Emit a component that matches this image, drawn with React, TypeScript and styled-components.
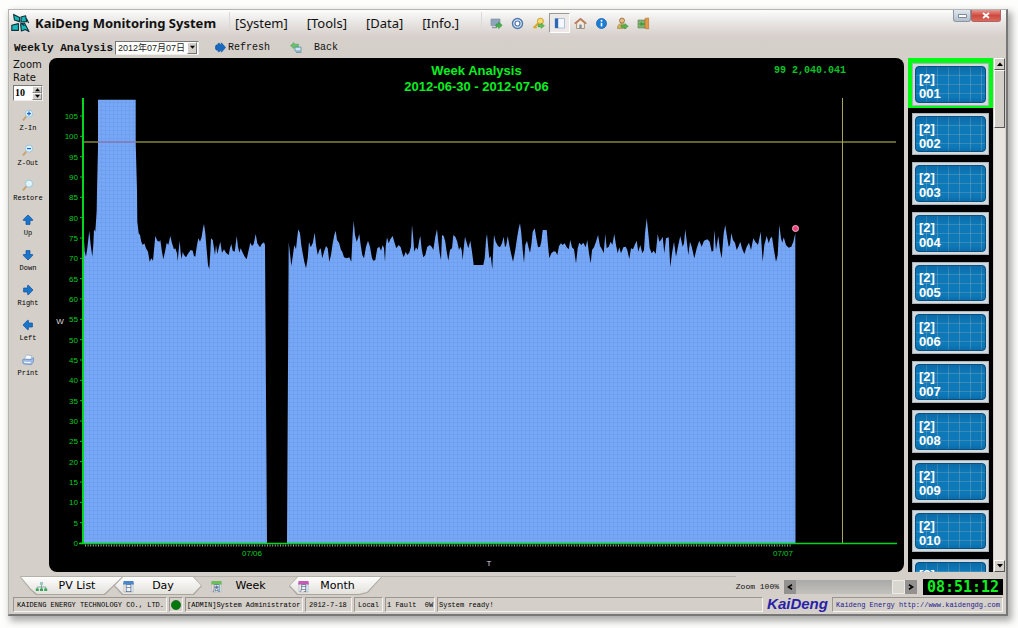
import React, { useState } from "react";
import styled, { createGlobalStyle, css } from "styled-components";

const mono = `"Liberation Mono", "Noto Sans CJK SC", monospace`;
const small = `"Liberation Serif", "Noto Sans CJK SC", serif`;
const sans = `"DejaVu Sans", "Noto Sans CJK SC", sans-serif`;
const arial = `"Liberation Sans", "Noto Sans CJK SC", sans-serif`;
const face = "#d4cfc8";

const GlobalStyle = createGlobalStyle`
  *, *::before, *::after { box-sizing: border-box; }
  body { margin: 0; background: #fdfdfb; color: #111; font-family: ${sans}; }
  button { border: 0; padding: 0; background: none; color: inherit; font: inherit; }
  svg { display: block; }
`;

const Page = styled.div`
  padding: 9px 10px 13px 8px;
`;

const Window = styled.main`
  display: flex;
  flex-direction: column;
  border: 1px solid #b4b4b0;
  border-right: 2px solid #777;
  border-bottom: 2px solid #777;
  background: ${face};
  box-shadow: 3px 4px 7px 1px #aaa;
`;

const TopArea = styled.header`
  height: 48px;
  background: linear-gradient(#fdfdfd 0, #e6e3e0 14px, #d6cfcb 27px, ${face} 48px);
`;

const TitleBar = styled.div`
  display: flex;
  align-items: center;
  height: 26px;
  padding: 0 5px 0 2px;
`;

const Brand = styled.h1`
  display: flex;
  align-items: center;
  gap: 5px;
  width: 218px;
  margin: 0;
  font: bold 13px/26px "Noto Sans", sans-serif;
  white-space: nowrap;
`;

const Menu = styled.nav`
  display: flex;
  align-items: center;
  gap: 19px;
  height: 22px;
  padding-left: 5px;
  width: 252px;
  border-left: 1px solid #dcd9d6;
  font: 13px/20px "Noto Sans", sans-serif;
`;

const ToolStrip = styled.div`
  display: flex;
  align-items: center;
  flex: 1;
  height: 22px;
  padding-left: 4px;
  border-left: 1px solid #dcd9d6;
`;

const ToolButton = styled.button<{ $on?: boolean }>`
  display: grid;
  place-items: center;
  width: 21px;
  height: 20px;
  ${(p) =>
    p.$on &&
    css`
      background: #ece9e7;
      border: 1px solid;
      border-color: #999 #fff #fff #999;
    `}
`;

const WindowControls = styled.div`
  display: flex;
  align-self: flex-start;
`;

const WindowButton = styled.button<{ $close?: boolean }>`
  display: grid;
  place-items: center;
  width: ${(p) => (p.$close ? 30 : 18)}px;
  height: 12px;
  border: 1px solid ${(p) => (p.$close ? "#a66" : "#8b96a3")};
  border-top: 0;
  border-radius: 0 0 3px 3px;
  background: ${(p) =>
    p.$close ? "linear-gradient(#e59a90, #cf4a40 50%, #d9685c)" : "linear-gradient(#dfe6ee, #b3c0ce)"};
`;

const ActionBar = styled.div`
  display: flex;
  align-items: center;
  height: 22px;
  padding: 1px 0 0 5px;
  font: 10px/14px ${mono};
`;

const ViewLabel = styled.label`
  width: 101px;
  font: bold 11px/14px ${mono};
  white-space: nowrap;
`;

const DateBox = styled.span`
  display: flex;
  position: relative;
  width: 84px;
  height: 14px;
  margin-right: 16px;
  border: 1px solid;
  border-color: #777 #eee #eee #777;
  background: #fff;
`;

const DateSelect = styled.select`
  appearance: none;
  width: 100%;
  border: 0;
  padding: 0 0 0 2px;
  background: none;
  font: 9px/12px ${arial};
  color: #222;
`;

const DateArrow = styled.span`
  position: absolute;
  right: 1px;
  top: 0;
  display: grid;
  place-items: center;
  width: 10px;
  height: 12px;
  background: ${face};
  border: 1px solid;
  border-color: #fff #777 #777 #fff;
  pointer-events: none;
`;

const ActionButton = styled.button<{ $gap: number }>`
  display: flex;
  align-items: center;
  gap: ${(p) => p.$gap}px;
  margin-right: 20px;
`;

const Body = styled.section`
  display: flex;
  height: 514px;
`;

const Rail = styled.aside`
  display: flex;
  flex-direction: column;
  width: 40px;
`;

const RateLabel = styled.label`
  padding: 0 0 1px 4px;
  font: 10px/13px ${sans};
`;

const Spinner = styled.div`
  display: flex;
  width: 30px;
  height: 16px;
  margin: 0 0 5px 4px;
  background: #fff;
  border: 1px solid;
  border-color: #777 #eee #eee #777;
`;

const SpinInput = styled.input`
  width: 18px;
  border: 0;
  padding: 0 0 0 1px;
  background: none;
  font: bold 10px/14px ${small};
`;

const SpinButtons = styled.div`
  display: grid;
  grid-template-rows: 1fr 1fr;
  width: 10px;
`;

const SpinButton = styled.button`
  display: grid;
  place-items: center;
  background: ${face};
  border: 1px solid;
  border-color: #fff #888 #888 #fff;
`;

const RailButton = styled.button`
  display: flex;
  flex-direction: column;
  align-items: center;
  gap: 2px;
  height: 35px;
  padding: 3px 2px 0 0;
  font: 7px/10px ${mono};
  color: #000;
`;

const ChartPanel = styled.figure`
  flex: 1;
  min-width: 0;
  margin: 0;
  overflow: hidden;
  border-radius: 8px;
  background: #000;
  color: #0aee22;
`;

const ChartHead = styled.figcaption`
  display: grid;
  grid-template-columns: 1fr auto 1fr;
  height: 40px;
  padding-top: 5px;
`;

const ChartTitle = styled.h2`
  grid-column: 2;
  margin: 0;
  text-align: center;
  font: bold 13px/16px ${arial};
`;

const Readout = styled.output`
  justify-self: end;
  padding: 1px 58px 0 0;
  font: bold 10px/14px ${mono};
  color: #0cc42c;
`;

const Plot = styled.svg`
  width: 100%;
  height: 474px;
  font-family: ${arial};
  font-size: 8px;
`;

const PanelList = styled.div`
  width: 85px;
  height: 514px;
  margin-left: 4px;
  overflow: hidden;
  background: #000;
`;

const PanelStack = styled.div`
  display: flex;
  flex-direction: column;
  height: 546px;
`;

const PanelSlot = styled.button<{ $active: boolean }>`
  flex: 1 1 0;
  min-height: 0;
  display: flex;
  padding: 2px 0 1px;
  border: solid ${(p) => (p.$active ? "#00fa14" : "#000")};
  border-width: 3px 4px 1px;
  background: ${(p) => (p.$active ? "#00fa14" : "#000")};
`;

const PanelFrame = styled.span`
  flex: 1;
  display: flex;
  align-self: stretch;
  padding: 2px;
  background: #d3dade;
  border: 1px solid #a9b2b8;
`;

const Panel = styled.span`
  flex: 1;
  padding: 4px 0 0 3px;
  border: 1px solid #0b4f7e;
  border-radius: 4px;
  background:
    linear-gradient(#0a4f8a55, transparent 8px, transparent 30px, #0a4f8a55),
    repeating-linear-gradient(90deg, transparent 0 10px, #8fa9b866 10px 11px),
    repeating-linear-gradient(transparent 0 8px, #8fa9b855 8px 9px),
    #0d79b8;
  color: #fff;
  text-align: left;
  font: bold 13px/15px ${arial};
`;

const ScrollBar = styled.div`
  display: flex;
  flex-direction: column;
  width: 11px;
  height: 514px;
  margin: 0 1px;
  background: #e9e6e1;
`;

const ScrollArrow = styled.button`
  display: grid;
  place-items: center;
  height: 12px;
  background: ${face};
  border: 1px solid;
  border-color: #fff #555 #555 #fff;
`;

const ScrollThumb = styled.div`
  height: 58px;
  margin-bottom: auto;
  background: ${face};
  border: 1px solid;
  border-color: #fff #555 #555 #fff;
`;

const BottomBar = styled.div`
  display: flex;
  align-items: center;
  height: 25px;
  padding: 4px 3px 0 11px;
`;

const Tabs = styled.div`
  display: flex;
  flex: 1;
  align-self: flex-start;
  border-top: 1px solid #b5b1ab;
`;

const shapes = {
  first: "polygon(0 0, 100% 0, calc(100% - 18px) 100%, 16px 100%, 10px 70%)",
  middle: "polygon(8px 0, calc(100% - 8px) 0, 100% 50%, calc(100% - 8px) 100%, 8px 100%, 0 50%)",
  last: "polygon(8px 0, 100% 0, calc(100% - 14px) 88%, calc(100% - 22px) 100%, 8px 100%, 0 50%)",
};

const Tab = styled.button<{ $shape: keyof typeof shapes; $on: boolean; $w: number }>`
  position: relative;
  display: flex;
  align-items: center;
  width: ${(p) => p.$w}px;
  height: 18px;
  padding-left: ${(p) => (p.$shape === "first" ? 15 : 8)}px;
  margin-right: ${(p) => (p.$shape === "first" ? -9 : 0)}px;
  font: 11px/16px ${sans};
  color: #000;
  isolation: isolate;

  &::before,
  &::after {
    content: "";
    position: absolute;
    inset: 0;
    z-index: -1;
    clip-path: ${(p) => shapes[p.$shape]};
    background: ${(p) => (p.$on ? "transparent" : "#aaa69f")};
  }
  &::after {
    inset: 0 1px 1px;
    background: ${(p) => (p.$on ? "transparent" : "linear-gradient(#fdfdfc, #e3e1dc)")};
  }
`;

const TabText = styled.span<{ $shape: keyof typeof shapes }>`
  flex: 1;
  padding-right: ${(p) => (p.$shape === "middle" ? 11 : 17)}px;
  text-align: center;
  white-space: nowrap;
`;

const ZoomLabel = styled.label`
  padding-right: 5px;
  font: 8px/12px ${mono};
`;

const ZoomBar = styled.div`
  display: flex;
  width: 133px;
  height: 14px;
  margin-right: 6px;
  background: linear-gradient(#a9a9a7, #c2c1bd);
`;

const ZoomArrow = styled.button`
  display: grid;
  place-items: center;
  width: 12px;
  background: #92918f;
`;

const ZoomRange = styled.input`
  appearance: none;
  flex: 1;
  min-width: 0;
  margin: 0;
  background: none;
  &::-webkit-slider-thumb {
    appearance: none;
    width: 13px;
    height: 14px;
    background: #d9d5cf;
    border: 1px solid #eceae6;
  }
`;

const Clock = styled.time`
  width: 80px;
  height: 16px;
  background: #000;
  color: #10ee20;
  text-align: center;
  font: bold 15px/16px "DejaVu Sans Mono", monospace;
`;

const StatusBar = styled.footer`
  display: flex;
  gap: 2px;
  height: 17px;
  padding: 0 3px 2px 4px;
`;

const StatusCell = styled.div<{ $w?: number; $pad?: number }>`
  display: flex;
  align-items: center;
  ${(p) => (p.$w ? `width: ${p.$w}px;` : "flex: 1;")}
  padding-left: ${(p) => p.$pad ?? 1}px;
  border: 1px solid;
  border-color: #9a9690 #f4f2ee #f4f2ee #9a9690;
  font: 7px/12px ${mono};
  color: #000;
  white-space: pre;
  a {
    color: #1b1b8c;
    text-decoration: none;
  }
`;

const StatusLed = styled.div`
  display: grid;
  place-items: center;
  width: 14px;
  border: 1px solid;
  border-color: #9a9690 #f4f2ee #f4f2ee #9a9690;
`;

const Logo = styled.strong`
  width: 65px;
  text-align: center;
  color: #2a1fa8;
  font: italic bold 15px/14px ${arial};
`;

type Dir = "up" | "down" | "left" | "right";
const turn: Record<Dir, number> = { up: 0, right: 90, down: 180, left: 270 };

const Triangle = ({ dir, w = 5 }: { dir: Dir; w?: number }) => (
  <svg width={w} height={w} viewBox="0 0 6 6">
    <path d="M0 5 L3 1.5 L6 5Z" fill="#000" transform={`rotate(${turn[dir]} 3 3)`} />
  </svg>
);

const Chevron = ({ dir }: { dir: "left" | "right" }) => (
  <svg width="6" height="6" viewBox="0 0 6 6">
    <path d={dir === "left" ? "M5 .8L1.4 3L5 5.2" : "M1 .8L4.6 3L1 5.2"} fill="none" stroke="#000" strokeWidth="1.6" />
  </svg>
);

const Arrow = ({ dir }: { dir: Dir }) => (
  <svg width="12" height="12" viewBox="0 0 12 12">
    <path
      d="M6 1 L10.6 5.4 V6.4 H8 V10.4 H4 V6.4 H1.4 V5.4Z"
      fill="#1976cb"
      stroke="#0c4f9c"
      strokeWidth=".7"
      transform={`rotate(${turn[dir]} 6 6)`}
    />
  </svg>
);

const Magnifier = ({ sign }: { sign?: "+" | "-" }) => (
  <svg width="12" height="12" viewBox="0 0 12 12">
    <path d="M4.6 7 L1.4 10.8" stroke="#c9a06c" strokeWidth="1.8" strokeLinecap="round" />
    <circle cx="7" cy="4.6" r="3.6" fill="#dff5fb" stroke="#9cc6dc" />
    {sign && <path d="M5 4.6H9" stroke="#2064c8" strokeWidth="1.3" />}
    {sign === "+" && <path d="M7 2.6V6.6" stroke="#2064c8" strokeWidth="1.3" />}
  </svg>
);

const Printer = () => (
  <svg width="12" height="12" viewBox="0 0 12 12">
    <path d="M4 1 L10 1.6 L8.6 5.5 L2.6 5Z" fill="#f8fbff" stroke="#8aa6cc" strokeWidth=".6" />
    <path d="M1 5.2 L9 5.6 L11.5 3.6 V7.6 L9.4 10.6 L1.6 10 L.6 8Z" fill="#9dbbe6" stroke="#587fb8" strokeWidth=".6" />
    <path d="M2 8.2 L8.6 8.6" stroke="#fff" />
  </svg>
);

const BrandMark = () => (
  <svg width="19" height="20" viewBox="0 0 19 20">
    <g fill="#18b9b9" stroke="#0c2f3a" strokeWidth="1.1" strokeLinejoin="round">
      <path d="M2.6 1.4 L8.6 4.6 V8.6 L3.4 7Z" />
      <path d="M.8 12.2 L7.4 10.6 V17.4 H.8Z" />
      <path d="M10 4 L14.6 2.8 L15.6 8.6 L10 9Z" />
      <path d="M9.6 11 L13.4 10 L18 18.6 L14.4 16.6 L10.4 18Z" />
    </g>
    <path d="M9.4 9.6 L13.4 12.8 M15.4 5.4 L17.6 10" stroke="#0c2f3a" strokeWidth="1.2" />
  </svg>
);

const RefreshIcon = () => (
  <svg width="11" height="11" viewBox="0 0 11 11">
    <path d="M1 3 H3 V1.4 H4.6 V2.4 H6.4 V.8 L10.6 5.5 L6.4 10.2 V8.6 H4.6 V9.6 H3 V8 H1 V6.8 H.4 V4.2 H1Z" fill="#1769c0" stroke="#0d4d98" strokeWidth=".6" />
  </svg>
);

const BackIcon = () => (
  <svg width="12" height="11" viewBox="0 0 12 11">
    <path d="M.5 3.6 L4 .6 V2.2 H8.4 V5 H4 V6.6Z" fill="#6cc46a" stroke="#3c9a4e" strokeWidth=".5" />
    <path d="M5 5.2 H11 V9 H5Z" fill="#cfe6f2" stroke="#4c94a8" strokeWidth=".8" />
    <path d="M6 10.3 H11.6" stroke="#5a8a90" strokeWidth=".9" />
  </svg>
);

const ToolIcon = ({ name }: { name: string }) => (
  <svg width="13" height="13" viewBox="0 0 13 13">
    {name === "Connect" && (
      <>
        <path d="M1 2 H10 V8.5 H1Z" fill="#8fa5bd" stroke="#75899f" strokeWidth=".6" />
        <path d="M2 10.5 H7" stroke="#8a949c" strokeWidth="1.4" />
        <path d="M6 7 H8.6 V5 L12.2 8.3 L8.6 11.6 V9.8 H6Z" fill="#43b24a" stroke="#2b8435" strokeWidth=".5" />
      </>
    )}
    {name === "Settings" && (
      <>
        <circle cx="6.5" cy="6.5" r="5" fill="#dceafb" stroke="#4d77ae" strokeWidth="1.4" />
        <circle cx="6.5" cy="6.5" r="2.5" fill="#fff" stroke="#4d77ae" strokeWidth="1.2" />
      </>
    )}
    {name === "Key" && (
      <>
        <path d="M7 5.5 L1.5 11 M3 9.6 L4.6 11.2" stroke="#d8a92a" strokeWidth="1.9" />
        <circle cx="8.4" cy="4.2" r="3" fill="#f8dc72" stroke="#cf9f26" />
        <path d="M6 7.5 H9 V6 L12.5 8.7 L9 11.4 V9.9 H6Z" fill="#62bd4d" stroke="#38903a" strokeWidth=".4" />
      </>
    )}
    {name === "Side panel" && (
      <>
        <path d="M2 1.5 H11.5 V11 H2Z" fill="#f5f9ff" stroke="#9fb5d6" strokeWidth=".8" />
        <path d="M2 1.5 H5.2 V11 H2Z" fill="#2f68b4" />
      </>
    )}
    {name === "Home" && (
      <>
        <path d="M2.6 6 V11.5 H10.4 V6 L6.5 3Z" fill="#f6ead8" stroke="#94806c" strokeWidth=".8" />
        <path d="M.7 6.6 L6.5 1.6 L12.3 6.6" fill="none" stroke="#bd7558" strokeWidth="1.4" />
        <path d="M5.3 7.6 H7.7 V11.4 H5.3Z" fill="#768fa5" />
      </>
    )}
    {name === "Information" && (
      <>
        <circle cx="6.5" cy="6.5" r="5" fill="#1c7fd6" stroke="#0f58a6" strokeWidth=".7" />
        <path d="M6.5 5.8 V9.4" stroke="#fff" strokeWidth="1.6" />
        <circle cx="6.5" cy="3.8" r="1" fill="#fff" />
      </>
    )}
    {name === "User" && (
      <>
        <circle cx="6" cy="3.6" r="2.5" fill="#e9bd7f" stroke="#8a6238" strokeWidth=".8" />
        <path d="M1.5 11.4 Q1.5 6.6 6 6.6 Q9.5 6.6 10 11.4Z" fill="#d8b55a" stroke="#907a3e" strokeWidth=".6" />
        <path d="M5 8 H8.8 V6.4 L12.4 9.2 L8.8 12 V10.4 H5Z" fill="#55b34b" stroke="#38883a" strokeWidth=".4" />
      </>
    )}
    {name === "Exit" && (
      <>
        <path d="M1 3 H8 V11 H1Z" fill="#84b46e" stroke="#5c7d54" strokeWidth=".6" />
        <path d="M8 1.4 L11.6 1 V12 L8 11.4Z" fill="#e39a45" stroke="#b06d2c" strokeWidth=".6" />
        <path d="M2 7 L5 4.4 V6 H7.4 V8 H5 V9.6Z" fill="#4f9a48" />
      </>
    )}
  </svg>
);

const CalendarIcon = ({ mark, color }: { mark: string; color: string }) => (
  <svg width="13" height="13" viewBox="0 0 13 13">
    <path d="M2 3 H11 V12 H2Z" fill="#f1f4f8" stroke="#a9b4c2" strokeWidth=".7" />
    <path d="M1 4.4 L1.6 1 H11.4 L12 4.4Z" fill={color} />
    <text x="6.5" y="11.4" textAnchor="middle" fontSize="8" fontFamily="Noto Sans CJK SC" fill="#35506e">
      {mark}
    </text>
  </svg>
);

const TreeIcon = () => (
  <svg width="13" height="13" viewBox="0 0 13 13">
    <path d="M6.5 4 V7 M2.2 9 V7 H10.8 V9 M6.5 7 V9" fill="none" stroke="#6f9a94" strokeWidth=".8" />
    <path d="M5 2 H8 V5 H5Z" fill="#9cc6c2" />
    <path d="M.8 8.4 H3.8 V11 H.8Z M5 8.4 H8 V11 H5Z M9.2 8.4 H12.2 V11 H9.2Z" fill="#36a55a" />
  </svg>
);

const firstRun =
  "12,150 14,185 18,200 22,175 28,122 32,165 37,200 40,165 42,118 46,125 49,80 50,60 51,0 54,-130 54,-271 167,-271 167,-140 171,0 172,95 176,130 180,135 184,155 188,165 193,160 198,175 204,185 209,215 214,205 219,212 222,180 226,138 232,152 238,155 241,150 245,180 250,208 255,185 260,158 265,165 271,138 276,160 282,178 286,175 291,190 293,214 296,180 299,152 302,190 305,207 308,185 312,195 318,202 325,190 332,180 338,182 342,198 346,200 350,170 355,145 360,155 365,140 369,115 372,102 376,130 380,180 384,225 388,238 391,190 393,145 398,150 402,175 405,195 408,165 412,192 416,175 421,155 426,188 432,178 438,188 446,195 450,175 454,162 458,182 464,185 470,138 474,170 478,188 482,175 488,188 494,200 500,208 505,185 511,158 516,168 521,162 527,132 532,160 540,172 545,162 552,157 555,165 561,1059 621,1059 626,157 630,190 634,228 638,200 643,165 648,178 652,140 655,118 660,130 664,165 668,190 673,215 678,235 683,205 687,155 692,172 698,160 704,128 708,165 713,195 718,180 722,175 727,205 732,185 738,168 743,175 748,215 753,195 758,160 763,135 767,122 771,150 777,158 783,180 787,185 792,202 800,205 808,202 814,215 818,130 821,92 825,135 830,155 834,145 838,132 842,165 847,195 852,205 858,170 864,152 870,170 876,205 880,212 886,210 892,175 898,170 903,182 908,165 912,175 915,215 917,170 921,142 926,160 931,148 938,138 943,155 949,175 956,165 962,172 967,190 971,202 977,185 982,195 988,188 993,170 996,105 999,135 1003,185 1008,172 1013,180 1018,150 1021,138 1025,178 1030,202 1036,195 1042,170";
const secondRun =
  "0,165 6,172 10,180 16,140 21,118 25,155 29,190 33,210 36,135 41,138 46,155 50,185 55,212 60,180 66,175 70,135 76,140 82,155 87,180 91,170 95,180 98,210 101,175 105,140 110,158 115,175 121,152 126,185 131,225 160,225 164,205 168,150 171,132 174,165 178,205 182,198 187,238 189,190 192,135 197,155 204,168 210,172 216,160 221,140 225,172 229,165 233,138 238,165 243,190 249,215 256,180 261,145 266,115 270,100 274,130 278,180 282,218 286,165 291,152 296,175 300,188 304,165 308,125 314,115 319,145 324,172 330,170 334,155 338,120 350,120 354,165 358,205 364,190 371,184 377,185 382,195 387,168 393,160 398,165 404,160 410,172 416,178 421,150 426,172 432,178 438,220 443,175 448,158 454,165 460,158 467,172 472,150 477,190 482,220 486,180 492,172 498,155 504,135 510,168 516,178 521,190 526,132 530,175 536,170 542,155 547,165 553,132 558,165 563,190 568,172 573,190 580,172 587,170 592,180 598,207 603,175 609,178 614,165 620,152 625,185 631,165 637,190 642,180 645,130 650,85 655,130 659,175 665,190 671,182 677,192 683,132 688,155 693,150 698,140 703,190 708,145 716,142 721,232 726,190 732,155 738,200 745,165 751,138 758,170 762,160 766,118 771,160 775,195 780,155 785,170 793,205 800,175 808,152 815,170 822,152 832,148 839,155 845,185 850,182 853,120 858,180 865,138 870,180 875,205 881,130 886,105 891,140 896,170 900,165 904,130 909,150 915,158 920,180 926,168 931,155 936,175 943,192 950,170 957,158 963,180 970,145 976,155 984,165 992,125 998,215 1003,165 1010,138 1016,160 1021,145 1026,140 1031,175 1038,215 1043,195 1048,105 1053,145 1057,158 1061,142 1068,165 1076,173 1084,170 1090,155 1096,130";

const place = (run: string, originX: number) =>
  run.split(" ").map((pair) => {
    const [x, y] = pair.split(",").map(Number);
    return `${(originX + x / 3).toFixed(1)},${(92 + y / 3).toFixed(1)}`;
  });

const trace = [...place(firstRun, 31), ...place(secondRun, 381)].join(" ");
const scale = Array.from({ length: 22 }, (_, i) => i * 5);
const wattY = (w: number) => 445 - (w * 427) / 105;

const WeekPlot = () => (
  <Plot viewBox="0 0 855 474" role="img" aria-label="Power by time, week view">
    <defs>
      <pattern id="weave" width="4" height="4" patternUnits="userSpaceOnUse">
        <rect width="4" height="4" fill="#77a7f5" />
        <path d="M0 .5H4 M.5 0V4" stroke="#6f9fef" strokeWidth="1" />
      </pattern>
    </defs>
    <polygon points={`35,445 ${trace} 746.5,445`} fill="url(#weave)" />
    <path d="M34 44H847" stroke="#85853c" strokeWidth="1.4" />
    <path d="M49 44H87" stroke="#7d7fe0" strokeWidth="1.4" />
    <path d="M793.5 0V445" stroke="#a5a55c" strokeWidth="1" />
    <path d="M36 447.5H742" stroke="#8fae8f" strokeWidth="2" strokeDasharray="1 1.6" />
    <path d="M34 0V446" stroke="#00d81c" strokeWidth="2" />
    <path d="M30 445.5H848" stroke="#00d81c" strokeWidth="1.4" />
    {scale.map((w) => (
      <React.Fragment key={w}>
        <path d={`M31 ${wattY(w)}H34`} stroke="#00c41c" />
        <text x="29" y={wattY(w) + 3} textAnchor="end" fill="#0bcc24">
          {w}
        </text>
      </React.Fragment>
    ))}
    <circle cx="746.5" cy="130.5" r="3" fill="#ee3f7c" stroke="#f6b8cc" />
    <text x="203" y="458" textAnchor="middle" fill="#0bcc24">07/06</text>
    <text x="734" y="458" textAnchor="middle" fill="#0bcc24">07/07</text>
    <text x="440" y="468" textAnchor="middle" fill="#ddd">T</text>
    <text x="11" y="226" textAnchor="middle" fill="#ddd">W</text>
  </Plot>
);

const menus = ["[System]", "[Tools]", "[Data]", "[Info.]"];
const tools = ["Connect", "Settings", "Key", "Side panel", "Home", "Information", "User", "Exit"];
const rail: [string, React.ReactNode][] = [
  ["Z-In", <Magnifier sign="+" />],
  ["Z-Out", <Magnifier sign="-" />],
  ["Restore", <Magnifier />],
  ["Up", <Arrow dir="up" />],
  ["Down", <Arrow dir="down" />],
  ["Right", <Arrow dir="right" />],
  ["Left", <Arrow dir="left" />],
  ["Print", <Printer />],
];
const panels = Array.from({ length: 11 }, (_, i) => String(i + 1).padStart(3, "0"));
const tabs: { label: string; shape: keyof typeof shapes; w: number; icon: React.ReactNode }[] = [
  { label: "PV List", shape: "first", w: 103, icon: <TreeIcon /> },
  { label: "Day", shape: "middle", w: 88, icon: <CalendarIcon mark="日" color="#4b86c9" /> },
  { label: "Week", shape: "middle", w: 87, icon: <CalendarIcon mark="周" color="#6cbf5a" /> },
  { label: "Month", shape: "last", w: 93, icon: <CalendarIcon mark="月" color="#c45cb4" /> },
];

export default function App() {
  const [active, setActive] = useState("001");
  const [tab, setTab] = useState("Week");
  return (
    <Page>
      <GlobalStyle />
      <Window>
        <TopArea>
          <TitleBar>
            <Brand>
              <BrandMark />
              KaiDeng Monitoring System
            </Brand>
            <Menu>
              {menus.map((m) => (
                <button key={m}>{m}</button>
              ))}
            </Menu>
            <ToolStrip>
              {tools.map((t) => (
                <ToolButton key={t} $on={t === "Side panel"} aria-label={t}>
                  <ToolIcon name={t} />
                </ToolButton>
              ))}
            </ToolStrip>
            <WindowControls>
              <WindowButton aria-label="Minimize">
                <svg width="9" height="4" viewBox="0 0 9 4">
                  <path d="M.5 .5H8.5V3.5H.5Z" fill="#fff" stroke="#66717d" strokeWidth=".8" />
                </svg>
              </WindowButton>
              <WindowButton $close aria-label="Close">
                <svg width="8" height="7" viewBox="0 0 8 7">
                  <path d="M1 1L7 6M7 1L1 6" stroke="#fff" strokeWidth="1.8" />
                </svg>
              </WindowButton>
            </WindowControls>
          </TitleBar>
          <ActionBar>
            <ViewLabel htmlFor="date">Weekly Analysis</ViewLabel>
            <DateBox>
              <DateSelect id="date">
                <option>2012年07月07日</option>
              </DateSelect>
              <DateArrow>
                <Triangle dir="down" />
              </DateArrow>
            </DateBox>
            <ActionButton $gap={2}>
              <RefreshIcon />
              Refresh
            </ActionButton>
            <ActionButton $gap={12}>
              <BackIcon />
              Back
            </ActionButton>
          </ActionBar>
        </TopArea>

        <Body>
          <Rail>
            <RateLabel htmlFor="rate">
              Zoom
              <br />
              Rate
            </RateLabel>
            <Spinner>
              <SpinInput id="rate" defaultValue="10" />
              <SpinButtons>
                <SpinButton aria-label="Increase">
                  <Triangle dir="up" />
                </SpinButton>
                <SpinButton aria-label="Decrease">
                  <Triangle dir="down" />
                </SpinButton>
              </SpinButtons>
            </Spinner>
            {rail.map(([label, icon]) => (
              <RailButton key={label}>
                {icon}
                {label}
              </RailButton>
            ))}
          </Rail>

          <ChartPanel>
            <ChartHead>
              <ChartTitle>
                Week Analysis
                <br />
                2012-06-30 - 2012-07-06
              </ChartTitle>
              <Readout>99 2,040.041</Readout>
            </ChartHead>
            <WeekPlot />
          </ChartPanel>

          <PanelList>
            <PanelStack>
              {panels.map((id) => (
                <PanelSlot key={id} $active={id === active} onClick={() => setActive(id)}>
                  <PanelFrame>
                    <Panel>
                      [2]
                      <br />
                      {id}
                    </Panel>
                  </PanelFrame>
                </PanelSlot>
              ))}
            </PanelStack>
          </PanelList>
          <ScrollBar>
            <ScrollArrow aria-label="Scroll up">
              <Triangle dir="up" w={6} />
            </ScrollArrow>
            <ScrollThumb />
            <ScrollArrow aria-label="Scroll down">
              <Triangle dir="down" w={6} />
            </ScrollArrow>
          </ScrollBar>
        </Body>

        <BottomBar>
          <Tabs role="tablist">
            {tabs.map((t) => (
              <Tab
                key={t.label}
                role="tab"
                aria-selected={t.label === tab}
                $shape={t.shape}
                $w={t.w}
                $on={t.label === tab}
                onClick={() => setTab(t.label)}
              >
                {t.icon}
                <TabText $shape={t.shape}>{t.label}</TabText>
              </Tab>
            ))}
          </Tabs>
          <ZoomLabel htmlFor="zoom">Zoom 100%</ZoomLabel>
          <ZoomBar>
            <ZoomArrow aria-label="Zoom out">
              <Chevron dir="left" />
            </ZoomArrow>
            <ZoomRange id="zoom" type="range" min="10" max="100" defaultValue="100" />
            <ZoomArrow aria-label="Zoom in">
              <Chevron dir="right" />
            </ZoomArrow>
          </ZoomBar>
          <Clock>08:51:12</Clock>
        </BottomBar>

        <StatusBar>
          <StatusCell $w={154} $pad={3}>KAIDENG ENERGY TECHNOLOGY CO., LTD.</StatusCell>
          <StatusLed>
            <svg width="10" height="10" viewBox="0 0 10 10">
              <circle cx="5" cy="5" r="4.6" fill="#04780c" stroke="#02560a" strokeWidth=".6" />
            </svg>
          </StatusLed>
          <StatusCell $w={118}>[ADMIN]System Administrator</StatusCell>
          <StatusCell $w={47} $pad={3}>2012-7-18</StatusCell>
          <StatusCell $w={29} $pad={3}>Local</StatusCell>
          <StatusCell $w={50}>1 Fault  0W</StatusCell>
          <StatusCell>System ready!</StatusCell>
          <Logo>KaiDeng</Logo>
          <StatusCell $w={171} $pad={3}>
            <a href="http://www.kaidengdg.com">Kaideng Energy http://www.kaidengdg.com</a>
          </StatusCell>
        </StatusBar>
      </Window>
    </Page>
  );
}
